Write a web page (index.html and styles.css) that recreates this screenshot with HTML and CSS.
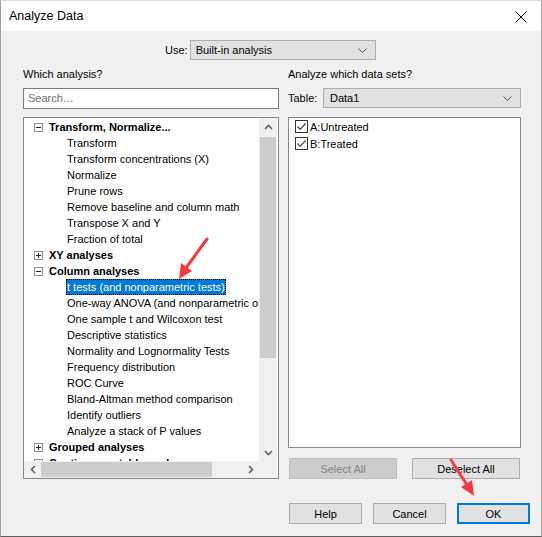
FILE: index.html
```html
<!DOCTYPE html>
<html>
<head>
<meta charset="utf-8">
<link rel="stylesheet" href="styles.css">
</head>
<body>
<div class="window">
  <div class="titlebar">
    <span class="title">Analyze Data</span>
    <svg class="close" width="12" height="12" viewBox="0 0 12 12"><path d="M0.5 0.5 L11.5 11.5 M11.5 0.5 L0.5 11.5" stroke="#000" stroke-width="1"/></svg>
  </div>
  <div class="body">
    <div class="use-row">
      <span class="use-label">Use:</span>
      <div class="select use-select"><span>Built-in analysis</span><svg class="chev" width="9" height="5" viewBox="0 0 9 5"><path d="M0.5 0.5 L4.5 4.5 L8.5 0.5" fill="none" stroke="#555" stroke-width="1"/></svg></div>
    </div>
    <div class="columns">
      <div class="col col-left">
        <div class="label">Which analysis?</div>
        <div class="search">Search…</div>
        <div class="tree">
          <div class="tree-view">
            <div class="row group"><span class="exp minus"></span><span class="gtext">Transform, Normalize...</span></div>
            <div class="row child"><span class="ctext">Transform</span></div>
            <div class="row child"><span class="ctext">Transform concentrations (X)</span></div>
            <div class="row child"><span class="ctext">Normalize</span></div>
            <div class="row child"><span class="ctext">Prune rows</span></div>
            <div class="row child"><span class="ctext">Remove baseline and column math</span></div>
            <div class="row child"><span class="ctext">Transpose X and Y</span></div>
            <div class="row child"><span class="ctext">Fraction of total</span></div>
            <div class="row group"><span class="exp plus"></span><span class="gtext">XY analyses</span></div>
            <div class="row group"><span class="exp minus"></span><span class="gtext">Column analyses</span></div>
            <div class="row child"><span class="ctext selected">t tests (and nonparametric tests)</span></div>
            <div class="row child"><span class="ctext">One-way ANOVA (and nonparametric or mixed)</span></div>
            <div class="row child"><span class="ctext">One sample t and Wilcoxon test</span></div>
            <div class="row child"><span class="ctext">Descriptive statistics</span></div>
            <div class="row child"><span class="ctext">Normality and Lognormality Tests</span></div>
            <div class="row child"><span class="ctext">Frequency distribution</span></div>
            <div class="row child"><span class="ctext">ROC Curve</span></div>
            <div class="row child"><span class="ctext">Bland-Altman method comparison</span></div>
            <div class="row child"><span class="ctext">Identify outliers</span></div>
            <div class="row child"><span class="ctext">Analyze a stack of P values</span></div>
            <div class="row group"><span class="exp plus"></span><span class="gtext">Grouped analyses</span></div>
            <div class="row group"><span class="exp plus"></span><span class="gtext">Contingency table analyses</span></div>
          </div>
          <div class="vscroll">
            <div class="sbtn"><svg width="9" height="6" viewBox="0 0 9 6"><path d="M1 5 L4.5 1.5 L8 5" fill="none" stroke="#606060" stroke-width="1.6"/></svg></div>
            <div class="vtrack"><div class="vthumb"></div></div>
            <div class="sbtn"><svg width="9" height="6" viewBox="0 0 9 6"><path d="M1 1 L4.5 4.5 L8 1" fill="none" stroke="#606060" stroke-width="1.6"/></svg></div>
          </div>
          <div class="hscroll">
            <div class="hbtn"><svg width="6" height="9" viewBox="0 0 6 9"><path d="M5 1 L1.5 4.5 L5 8" fill="none" stroke="#606060" stroke-width="1.6"/></svg></div>
            <div class="htrack"><div class="hthumb"></div></div>
            <div class="hbtn"><svg width="6" height="9" viewBox="0 0 6 9"><path d="M1 1 L4.5 4.5 L1 8" fill="none" stroke="#606060" stroke-width="1.6"/></svg></div>
          </div>
          <div class="corner"></div>
        </div>
      </div>
      <div class="col col-right">
        <div class="label">Analyze which data sets?</div>
        <div class="table-row">
          <span class="table-label">Table:</span>
          <div class="select table-select"><span>Data1</span><svg class="chev" width="9" height="5" viewBox="0 0 9 5"><path d="M0.5 0.5 L4.5 4.5 L8.5 0.5" fill="none" stroke="#555" stroke-width="1"/></svg></div>
        </div>
        <div class="list">
          <div class="item"><span class="cb"><svg width="11" height="11" viewBox="0 0 11 11"><path d="M1.5 5.5 L4.2 8.3 L9.5 2.5" fill="none" stroke="#444" stroke-width="1.2"/></svg></span><span>A:Untreated</span></div>
          <div class="item"><span class="cb"><svg width="11" height="11" viewBox="0 0 11 11"><path d="M1.5 5.5 L4.2 8.3 L9.5 2.5" fill="none" stroke="#444" stroke-width="1.2"/></svg></span><span>B:Treated</span></div>
        </div>
        <div class="sel-buttons">
          <div class="btn disabled">Select All</div>
          <div class="btn">Deselect All</div>
        </div>
      </div>
    </div>
    <div class="footer">
      <div class="btn fbtn">Help</div>
      <div class="btn fbtn">Cancel</div>
      <div class="btn fbtn ok">OK</div>
    </div>
  </div>
  <svg class="arrows" width="542" height="537" viewBox="0 0 542 537">
    <path d="M207 239 L186 268" stroke="#f23b3b" stroke-width="3" stroke-linecap="round"/>
    <polygon points="179,279 181,263 192,271" fill="#f23b3b"/>
    <path d="M451 460 L467 485" stroke="#f23b3b" stroke-width="3" stroke-linecap="round"/>
    <polygon points="474,496 461,487 472,480" fill="#f23b3b"/>
  </svg>
</div>
</body>
</html>
```

FILE: styles.css
```css
* { box-sizing: border-box; }
html, body { margin: 0; padding: 0; }
body {
  font-family: "Liberation Sans", Arial, sans-serif;
  font-size: 11px;
  color: #000;
  background: #fff;
}
.window {
  position: relative;
  width: 542px;
  height: 537px;
  border: 1px solid #a0a0a0;
  border-top-color: #e0e0e0;
  border-bottom-color: #5f5f5f;
  display: flex;
  flex-direction: column;
  background: #f0f0f0;
}
.titlebar {
  height: 30px;
  background: #fff;
  display: flex;
  align-items: center;
  justify-content: space-between;
  padding: 0 14px 0 8px;
}
.title { font-size: 12.5px; }
.close { display: block; margin-top: 1px; }
.body {
  flex: 1;
  display: flex;
  flex-direction: column;
  padding: 9px 11px 0 22px;
}
.use-row {
  display: flex;
  align-items: center;
  padding-left: 142px;
  height: 20px;
}
.use-label { margin-right: 2px; }
.select {
  height: 20px;
  background: #e1e1e1;
  border: 1px solid #adadad;
  display: flex;
  align-items: center;
  justify-content: space-between;
  padding: 0 8px 0 5px;
}
.use-select { width: 186px; }
.chev { display: block; }
.columns {
  display: grid;
  grid-template-columns: 256px 233px;
  column-gap: 9px;
  margin-top: 6px;
}
.col { display: flex; flex-direction: column; }
.label { height: 16px; line-height: 16px; }
.search {
  margin-top: 6px;
  height: 21px;
  background: #fff;
  border: 1px solid #7a7a7a;
  color: #6d6d6d;
  padding: 0 4px;
  line-height: 19px;
}
.tree {
  margin-top: 8px;
  height: 362px;
  border: 1px solid #828790;
  background: #fff;
  display: grid;
  grid-template-columns: 235px 18px;
  grid-template-rows: 343px 17px;
}
.tree-view {
  overflow: hidden;
  padding-top: 1px;
}
.row {
  height: 16px;
  display: flex;
  align-items: center;
  white-space: nowrap;
}
.group { padding-left: 10px; }
.gtext { font-weight: bold; margin-left: 6px; }
.child { padding-left: 42px; }
.ctext { padding: 0 1px; height: 16px; line-height: 16px; }
.ctext.selected {
  background: #0078d7;
  color: #fff;
  outline: 1px dotted #000;
  outline-offset: -1px;
}
.exp {
  width: 9px;
  height: 9px;
  border: 1px solid #919191;
  position: relative;
  background: #fff;
  flex: none;
}
.exp::before {
  content: "";
  position: absolute;
  left: 1px;
  top: 3px;
  width: 5px;
  height: 1px;
  background: #222;
}
.exp.plus::after {
  content: "";
  position: absolute;
  left: 3px;
  top: 1px;
  width: 1px;
  height: 5px;
  background: #222;
}
.vscroll {
  background: #f0f0f0;
  display: flex;
  flex-direction: column;
}
.sbtn {
  height: 17px;
  display: flex;
  align-items: center;
  justify-content: center;
}
.vtrack { flex: 1; padding: 1px 1px; }
.vthumb { margin-top: 1px; height: 221px; background: #cdcdcd; }
.hscroll {
  background: #f0f0f0;
  display: flex;
}
.hbtn {
  width: 17px;
  display: flex;
  align-items: center;
  justify-content: center;
}
.htrack { flex: 1; padding: 1px 0; }
.hthumb { height: 100%; width: 171px; background: #cdcdcd; }
.corner { background: #f0f0f0; }
.table-row {
  margin-top: 6px;
  display: flex;
  align-items: center;
}
.table-label { width: 35px; }
.table-select { flex: 1; height: 20px; padding-left: 6px; }
.list {
  margin-top: 9px;
  height: 331px;
  background: #fff;
  border: 1px solid #828790;
  padding: 0 0 0 6px;
}
.item {
  display: flex;
  align-items: center;
  height: 17px;
}
.cb {
  width: 13px;
  height: 13px;
  border: 1px solid #333;
  background: #fff;
  margin-right: 2px;
  display: flex;
  align-items: center;
  justify-content: center;
}
.cb svg { display: block; }
.sel-buttons {
  margin-top: 10px;
  display: flex;
  justify-content: space-between;
  padding: 0 1px 0 1px;
}
.btn {
  height: 21px;
  background: #e1e1e1;
  border: 1px solid #adadad;
  display: flex;
  align-items: center;
  justify-content: center;
}
.sel-buttons .btn { width: 108px; }
.btn.disabled {
  background: #cccccc;
  border-color: #bfbfbf;
  color: #838383;
}
.footer {
  margin-top: 24px;
  display: flex;
  justify-content: flex-end;
  gap: 11px;
}
.fbtn { width: 73px; }
.ok { border: 2px solid #0078d7; }
.arrows {
  position: absolute;
  left: -1px;
  top: -1px;
  pointer-events: none;
}
```
